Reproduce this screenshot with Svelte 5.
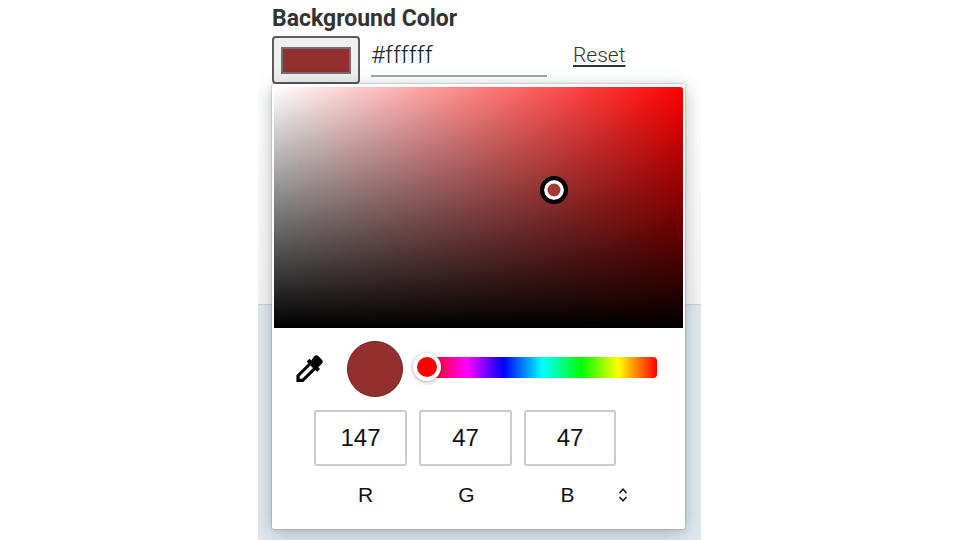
<script>
  const channels = [
    { label: 'R', value: 147 },
    { label: 'G', value: 47 },
    { label: 'B', value: 47 }
  ];
</script>

<main class="stage">
  <section class="panel">
    <div class="upper">
      <h2>Background Color</h2>
      <div class="controls">
        <button class="swatch" aria-label="Pick colour"><span></span></button>
        <div class="hex">#ffffff</div>
        <a class="reset" href="#reset">Reset</a>
      </div>
    </div>
    <div class="lower"></div>

    <div class="popup">
      <div class="field">
        <div class="pointer"></div>
      </div>
      <div class="tools">
        <svg class="dropper" viewBox="0 0 32 32" aria-hidden="true">
          <path d="M20.500 3.500 a3.200 3.200 0 0 1 4.500 0 l3.500 3.500 a3.200 3.200 0 0 1 0 4.500 l-3.700 3.700 1.900 1.900 -3 3 -1.900-1.900 L8.800 31 H1.500 v-7.300 L14.300 10.900 l-1.900-1.900 3-3 1.900 1.900 Z M16.500 13.300 L5 24.800 v2.700 h2.700 L19.200 16 Z" fill="#000" fill-rule="evenodd"/>
        </svg>
        <div class="preview"></div>
        <div class="hue"><span></span></div>
      </div>
      <div class="inputs">
        {#each channels as c}
          <div class="value">{c.value}</div>
        {/each}
      </div>
      <div class="labels">
        {#each channels as c}
          <span>{c.label}</span>
        {/each}
        <svg class="toggle" viewBox="0 0 10 16" aria-hidden="true">
          <path d="M1.500 6 5 2.200 8.500 6 M1.500 10 5 13.800 8.500 10" fill="none" stroke="#111" stroke-width="1.500"/>
        </svg>
      </div>
    </div>
  </section>
</main>

<style>
  :global(body) { margin: 0; background: #fff; }
  .stage {
    width: 960px;
    height: 540px;
    display: flex;
    padding-left: 258px;
    box-sizing: border-box;
    overflow: hidden;
  }
  .panel {
    position: relative;
    width: 443px;
    height: 540px;
    display: flex;
    flex-direction: column;
    overflow: hidden;
  }
  .upper {
    height: 305px;
    flex: none;
    background: linear-gradient(#fff 0, #fff 70px, #f6f6f6 305px);
    border-bottom: 1px solid #cfcfcf;
    box-sizing: border-box;
    padding: 4px 0 0 14px;
  }
  .lower { flex: 1; background: #e0e9ed; }
  h2 {
    margin: 0;
    font: 700 23px/29px Roboto, sans-serif;
    color: #333;
  }
  .controls {
    display: flex;
    align-items: flex-start;
    margin-top: 3px;
  }
  .swatch {
    width: 88px;
    height: 48px;
    padding: 0;
    box-sizing: border-box;
    border: 2px solid #5a5a5a;
    border-radius: 4px;
    background: #efefef;
    display: flex;
    align-items: center;
    justify-content: center;
  }
  .swatch span {
    display: block;
    width: 70px;
    height: 27px;
    box-sizing: border-box;
    background: #932f2f;
    border: 2px solid #707070;
  }
  .hex {
    width: 176px;
    height: 41px;
    margin-left: 11px;
    box-sizing: border-box;
    border-bottom: 2px solid #a5a5a5;
    font: 300 24px/38px Roboto, sans-serif;
    color: #222;
  }
  .reset {
    margin-left: 26px;
    font: 300 21px/38px Roboto, sans-serif;
    color: #333;
    text-decoration: underline;
    text-underline-offset: 3px;
  }
  .popup {
    position: absolute;
    left: 14px;
    top: 84px;
    width: 413px;
    height: 445px;
    box-sizing: border-box;
    padding: 3px 2px 0 2px;
    background: #fff;
    border-radius: 2px;
    box-shadow: 0 0 2px rgba(0,0,0,.45), 0 4px 18px rgba(50,70,85,.34);
  }
  .field {
    position: relative;
    height: 241px;
    border-radius: 3px 3px 0 0;
    background:
      linear-gradient(to top, #000, rgba(0,0,0,0)),
      linear-gradient(to right, #fff, #f00);
  }
  .pointer {
    position: absolute;
    left: 266px;
    top: 89px;
    width: 28px;
    height: 28px;
    box-sizing: border-box;
    border-radius: 50%;
    background: #a33a3a;
    border: 4px solid #000;
    box-shadow: inset 0 0 0 3.500px #fff;
  }
  .tools {
    display: flex;
    align-items: center;
    height: 56px;
    margin-top: 13px;
    padding-left: 21px;
  }
  .dropper { width: 30px; height: 30px; flex: none; margin-top: -2px; }
  .preview {
    flex: none;
    width: 56px;
    height: 56px;
    margin-left: 22px;
    box-sizing: border-box;
    border-radius: 50%;
    background: #932f2f;
    border: 1px solid #6e1f1f;
  }
  .hue {
    position: relative;
    flex: none;
    width: 229px;
    height: 21px;
    margin: -3px 0 0 25px;
    border-radius: 0 4px 4px 0;
    background: linear-gradient(to right, #f00 0%, #f0f 17%, #00f 33%, #0ff 50%, #0f0 67%, #ff0 83%, #f00 100%);
  }
  .hue span {
    position: absolute;
    left: -15px;
    top: -4px;
    width: 28px;
    height: 28px;
    box-sizing: border-box;
    border-radius: 50%;
    background: #f00;
    border: 4px solid #fff;
    box-shadow: 0 1px 4px rgba(0,0,0,.35);
  }
  .inputs {
    display: flex;
    gap: 12px;
    margin: 13px 0 0 40px;
  }
  .value {
    width: 93px;
    height: 56px;
    box-sizing: border-box;
    border: 2px solid #ccc;
    border-radius: 3px;
    text-align: center;
    font: 400 24px/52px "Liberation Sans", Arial, sans-serif;
    color: #111;
  }
  .value:last-child { width: 92px; }
  .labels {
    position: relative;
    display: flex;
    gap: 8px;
    margin: 17px 0 0 45px;
  }
  .labels span {
    width: 93px;
    text-align: center;
    font: 400 21px/24px "Liberation Sans", Arial, sans-serif;
    color: #111;
  }
  .toggle {
    position: absolute;
    left: 299px;
    top: 4px;
    width: 10px;
    height: 16px;
  }
</style>
